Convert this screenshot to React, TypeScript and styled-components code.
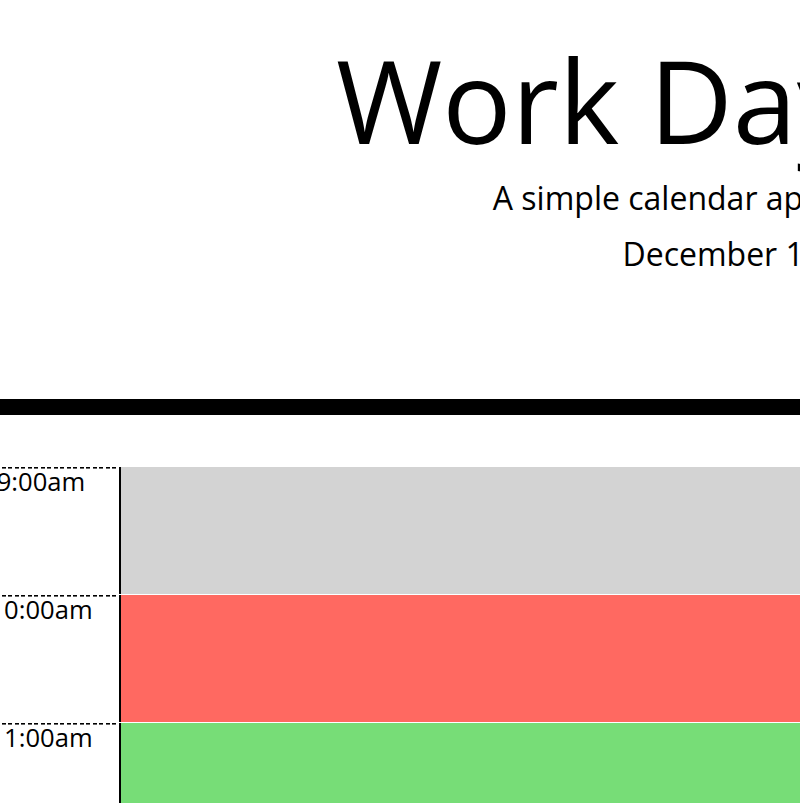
import * as React from 'react';
import { createGlobalStyle, styled } from 'styled-components';
import { Save } from 'lucide-react';

// the reference is a 1.6x zoomed view of the scheduler, cropped on both sides
const GlobalStyle = createGlobalStyle`
  html, body {
    margin: 0;
    padding: 0;
    overflow: hidden;
    background: #ffffff;
  }
  body {
    font-family: 'Open Sans', 'Noto Sans', sans-serif;
    font-size: 25.6px;
    line-height: 1;
    color: #000000;
  }
  * {
    box-sizing: border-box;
  }
`;

const Page = styled.div`
  width: 1900px;
  margin-left: -51px;
`;

const Jumbotron = styled.header`
  padding: 31px 74px 105.5px 32px;
  margin-bottom: 51.2px;
  text-align: center;
  border-bottom: 16px solid #000000;
`;

const Title = styled.h1`
  margin: 0 0 12.8px;
  font-size: 115.2px;
  font-weight: 400;
  line-height: 1.2;
`;

const Lead = styled.p`
  margin: 0 0 23.6px;
  font-size: 32px;
  font-weight: 400;
  line-height: 1;
`;

const Container = styled.main`
  width: 1872px;
  margin: 0 auto;
  display: flex;
  flex-direction: column;
`;

const Row = styled.div`
  display: flex;
  height: 128px;
  border-top: 1.6px solid #ffffff;
  text-align: center;
`;

const Hour = styled.div`
  flex: 0 0 156px;
  padding: 1.6px 24px 0;
  color: #000000;
  background: #ffffff
    repeating-linear-gradient(90deg, #000000 0 4px, transparent 4px 6.5px)
    top left / 100% 1.6px no-repeat;
`;

type Status = 'past' | 'present' | 'future';

const statusColor: Record<Status, string> = {
  past: '#d3d3d3',
  present: '#ff6961',
  future: '#77dd77',
};

const Description = styled.textarea<{ $status: Status }>`
  flex: 0 0 1560px;
  padding: 16px;
  border: none;
  border-left: 2px solid #000000;
  resize: none;
  background: ${(p) => statusColor[p.$status]};
  color: #ffffff;
  font: inherit;
  outline: none;
`;

const SaveBtn = styled.button`
  flex: 0 0 156px;
  display: flex;
  align-items: center;
  justify-content: center;
  border: none;
  border-radius: 0 24px 24px 0;
  background: #06aed5;
  color: #ffffff;
`;

const hours: { label: string; status: Status }[] = [
  { label: '9:00am', status: 'past' },
  { label: '10:00am', status: 'present' },
  { label: '11:00am', status: 'future' },
  { label: '12:00pm', status: 'future' },
  { label: '1:00pm', status: 'future' },
];

export default function App() {
  return (
    <>
      <GlobalStyle />
      <Page>
        <Jumbotron>
          <Title>Work Day Scheduler</Title>
          <Lead>A simple calendar app for scheduling your work day</Lead>
          <Lead>December 17th 2020, 10:32:45 am</Lead>
        </Jumbotron>
        <Container>
          {hours.map((h) => (
            <Row key={h.label}>
              <Hour>{h.label}</Hour>
              <Description $status={h.status} />
              <SaveBtn aria-label="save">
                <Save size={32} />
              </SaveBtn>
            </Row>
          ))}
        </Container>
      </Page>
    </>
  );
}
